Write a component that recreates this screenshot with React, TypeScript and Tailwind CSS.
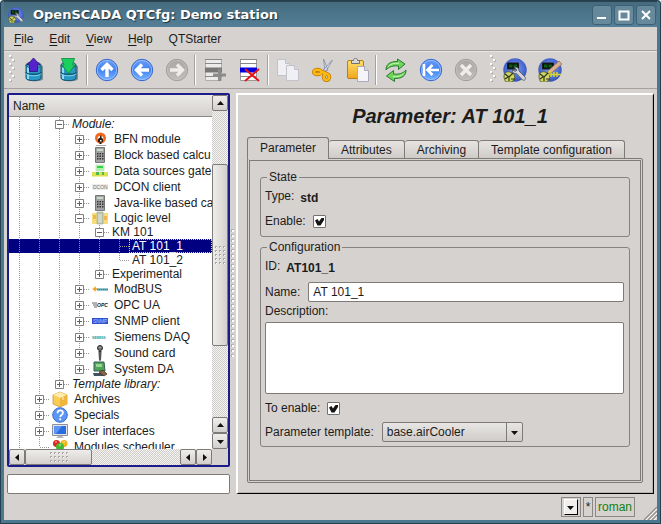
import { useState } from 'react'
import type { ReactNode } from 'react'

type Guide = 'line' | 'end' | 'tee' | 'plus' | 'minus' | 'lastplus'

interface Row {
  label: string
  guides: Guide[]
  icon?: ReactNode
  italic?: boolean
  short?: boolean
}

function AppIcon({ size = 24, tool }: { size?: number; tool?: 'wrench' | 'pencil' }) {
  return (
    <svg width={size} height={size} viewBox="0 0 24 24">
      <defs>
        <radialGradient id="ball" cx="50%" cy="45%" r="65%">
          <stop offset="0" stopColor="#7f9df0" />
          <stop offset=".6" stopColor="#4a6bd4" />
          <stop offset="1" stopColor="#283f8c" />
        </radialGradient>
      </defs>
      <circle cx="12" cy="12" r="11.7" fill="url(#ball)" />
      <path d="M4.500 5h11v6h-11z" fill="#06140a" stroke="#1c1c1c" />
      <path d="M6 6.500h3.500v3H6zM10.500 6.500H14v3h-3.500z" fill="#0b5a16" />
      <path d="M1 18c0-3 3-5 6-4l4 2 1 4-3 4H3c-1-1-2-3-2-6z" fill="#cfd66a" stroke="#4d521f" strokeWidth=".8" />
      <path d="m2 16 4 3 4-4M6 19v4M2 21l3-2M8 21h4" fill="none" stroke="#343815" strokeWidth="1.200" />
      {tool === 'pencil' ? (
        <>
          <path d="M10 16.500h13M13 14v5M16 14v5M19 14v5" stroke="#d6d533" strokeWidth="1.500" />
          <path d="m11 12 10-9 3 3-10 8.500-4 .5z" fill="#dbb092" stroke="#8d6550" strokeWidth=".7" />
          <path d="m10 15 1-3 3 2.500z" fill="#ead82d" />
        </>
      ) : (
        <path d="M11 9.500c3-1 5 .5 5 3.500l6 6c1.500 2-.5 4-2.500 3l-6-6.500c-2.500.5-4.500-1-4-3.500l3 1.500 1.500-1.500z" fill="#d0d2d6" stroke="#5a5f66" strokeWidth=".9" />
      )}
    </svg>
  )
}

function DbIcon({ up }: { up?: boolean }) {
  return (
    <svg width="24" height="24" viewBox="0 0 24 24">
      <path d="M5 8v13c0 3 16 3 16 0V8z" fill="#12394d" opacity=".45" />
      <path d="M4 7v13c0 3.500 15 3.500 15 0V7z" fill="#2a98c4" stroke="#17536e" />
      <path d="M6 9v12" stroke="#8ddcf5" strokeWidth="2" />
      <path d="M4 14c0 3 15 3 15 0" fill="none" stroke="#125471" strokeWidth="1.500" />
      <path d="M4 15.500c0 3 15 3 15 0" fill="none" stroke="#7fd7f2" />
      <ellipse cx="11.500" cy="7" rx="7.500" ry="3" fill="#66c5e6" stroke="#17536e" />
      {up
        ? <path d="m11.500 0 6.500 7h-2.500v6.500h-8V7H5z" fill="#5522cc" stroke="#29107e" strokeWidth=".8" />
        : <path d="M4.500.5h13L15.500 7H18l-6.500 8.500L5 7h2z" fill="#1bcf5e" stroke="#0d8a37" strokeWidth=".8" />}
    </svg>
  )
}

function RoundIcon({ kind }: { kind: 'up' | 'left' | 'right' | 'start' | 'stop' }) {
  const gray = kind === 'right' || kind === 'stop'
  const paths = {
    up: 'M12 19V6M6.500 12 12 6.500l5.500 5.500',
    left: 'M19 12H6M12 6.500 6.500 12l5.500 5.500',
    right: 'M5 12h13M12 6.500l5.500 5.500-5.500 5.500',
    start: 'M20 12H8M13.500 7l-5 5 5 5M5 6v12',
    stop: 'm7 7 10 10M17 7 7 17',
  }
  return (
    <svg width="24" height="24" viewBox="0 0 24 24">
      <defs>
        <linearGradient id="blueBall" x2="0" y2="1">
          <stop offset="0" stopColor="#6a9cf5" />
          <stop offset=".5" stopColor="#4382f2" />
          <stop offset="1" stopColor="#79b6ff" />
        </linearGradient>
        <linearGradient id="grayBall" x2="0" y2="1">
          <stop offset="0" stopColor="#aaa6a3" />
          <stop offset="1" stopColor="#c0bdba" />
        </linearGradient>
      </defs>
      <circle cx="12" cy="12" r="10.700" fill={gray ? 'url(#grayBall)' : 'url(#blueBall)'} stroke={gray ? '#a19d9a' : '#3467cf'} />
      <circle cx="12" cy="12" r="9.600" fill="none" stroke={gray ? '#c4c1be' : '#a3c3fb'} strokeWidth=".8" />
      <path d={paths[kind]} fill="none" stroke={gray ? '#efedeb' : '#fff'} strokeWidth={kind === 'start' ? 2.600 : 3.400} />
    </svg>
  )
}

function ItemIcon({ remove }: { remove?: boolean }) {
  return (
    <svg width="24" height="24" viewBox="0 0 24 24">
      <path d="M2.500 1.500h16v21h-16z" fill={remove ? '#fff' : '#ecebe9'} stroke={remove ? '#999' : '#b0aeac'} />
      <path d="M2 1.500h17M2 5.500h17M2 18.500h17" stroke="#888" />
      <path d="M2 9.500h17v5H2z" fill={remove ? '#0000e0' : '#777'} />
      {remove
        ? <path d="m7 11 14 12M21 11 7 23" stroke="#e81515" strokeWidth="2" />
        : <path d="M16.500 11v12M10 17h13" stroke="#8b8b8b" strokeWidth="3" />}
    </svg>
  )
}

function CopyIcon() {
  return (
    <svg width="24" height="24" viewBox="0 0 24 24" fill="#f0f0f4" stroke="#c2c2cc">
      <path d="M1.500 1.500h8l4 4v12h-12z" />
      <path d="M9.500 1.500v4h4" fill="#d9d9e2" />
      <path d="M10.500 7.500h8l4 4v11h-12z" />
      <path d="M18.500 7.500v4h4" fill="#d9d9e2" />
    </svg>
  )
}

function CutIcon() {
  return (
    <svg width="24" height="24" viewBox="0 0 24 24">
      <path d="m12.500 1 4.500 11-3 1.500zM21.500 2l-7 12-3-1.500z" fill="#e2e5ef" stroke="#8089a0" strokeWidth=".8" />
      <g fill="none" stroke="#b97500" strokeWidth="4">
        <ellipse cx="6.500" cy="14" rx="3.700" ry="2.200" />
        <ellipse cx="15.500" cy="19" rx="2.700" ry="3" />
        <path d="m10 13.500 6 2.500" />
      </g>
      <g fill="none" stroke="#fdb813" strokeWidth="2.600">
        <ellipse cx="6.500" cy="14" rx="3.700" ry="2.200" />
        <ellipse cx="15.500" cy="19" rx="2.700" ry="3" />
        <path d="m10 13.500 6 2.500" />
      </g>
    </svg>
  )
}

function PasteIcon() {
  return (
    <svg width="24" height="24" viewBox="0 0 24 24">
      <defs>
        <linearGradient id="board" x2="0" y2="1">
          <stop offset="0" stopColor="#ffe06b" />
          <stop offset="1" stopColor="#efa51c" />
        </linearGradient>
      </defs>
      <rect x="1.500" y="2.500" width="16" height="18" rx="1.500" fill="url(#board)" stroke="#b97d16" />
      <path d="M5.500 5.500v-3h2c0-3 4-3 4 0h2v3z" fill="#d9d9dc" stroke="#77706a" />
      <path d="M11.500 8.500h7l4 4v11h-11z" fill="#f4f4f9" stroke="#aaaabd" />
      <path d="M18.500 8.500v4h4" fill="#d9d9e5" stroke="#aaaabd" />
    </svg>
  )
}

function RefreshIcon() {
  return (
    <svg width="24" height="24" viewBox="0 0 24 24" fill="#6fd45c" stroke="#2a7a30">
      <path d="M2 12c0-6 4-8.500 11.500-8.500V1l7.500 5-6.500 5.500V8C9 7.500 5 8.500 2 12z" />
      <path d="M22 12c0 6-4 8.500-11.500 8.500V23.500L2.500 18l7-5.500V16c5.500.5 9.500-.5 12.500-4z" />
      <path d="M4.500 8.500C7 5.500 10 5.300 15 5.300M19.500 15.500c-2.500 3-5.500 3.200-10.500 3.200" fill="none" stroke="#c9f7be" />
    </svg>
  )
}

const BfnIcon = (
  <svg width="16" height="16" viewBox="0 0 16 16">
    <circle cx="8.500" cy="7" r="5.500" fill="#f2691c" />
    <circle cx="8.500" cy="7.500" r="2.800" fill="#fff" />
    <path d="M8 4.500h1.500v2L11 8v3H9.500v2h-2v-2H6V8l2-1.500z" fill="#2a1a12" />
    <path d="M8 9h1.500v1.500H8z" fill="#fff" />
    <path d="M4 14.500h10" stroke="#aaa" />
  </svg>
)

const CalcIcon = (
  <svg width="16" height="16" viewBox="0 0 16 16">
    <path d="M3.500.5h9v15h-9z" fill="#a2a2a2" stroke="#777" />
    <path d="M5 2h6v2H5z" fill="#c7d9c7" />
    <path d="M5 6h1.500v1.500H5zM7.500 6H9v1.500H7.500zM10 6h1.500v1.500H10zM5 8.500h1.500V10H5zM7.500 8.500H9V10H7.500zM10 8.500h1.500V10H10zM5 11h1.500v1.500H5zM7.500 11H9v1.500H7.500zM10 11h1.500v1.500H10z" fill="#333" />
  </svg>
)

const GateIcon = (
  <svg width="16" height="16" viewBox="0 0 16 16">
    <path d="M4 2h8v6H4z" fill="#a9f5a4" stroke="#d3dfd0" />
    <path d="M5 4h6" stroke="#2fd544" strokeWidth="2" />
    <path d="M0 9h16v5H0z" fill="#dde04f" />
    <path d="M4 9h3v3H4zM10 9h2v3h-2z" fill="#52b850" />
    <path d="M0 13.500h16" stroke="#f2ef9c" />
  </svg>
)

const DconIcon = (
  <svg width="16" height="16" viewBox="0 0 16 16">
    <path d="M0 5h16v6H0z" fill="#ececec" />
    <text x="1" y="10" fontSize="5" fontFamily="Liberation Sans, sans-serif" fill="#777">DCON</text>
  </svg>
)

const LogicIcon = (
  <svg width="16" height="14" viewBox="0 0 16 14">
    <path d="M0 2h16v11H0z" fill="#f5dd7d" />
    <path d="M5 1h6v12H5z" fill="#b9c5b8" stroke="#a0a48c" strokeWidth=".6" />
    <path d="M1 4h3v4H1zM12 5h3v4h-3z" fill="#efb64e" />
    <path d="M7 3v9M9 3v9" stroke="#e5e8df" />
  </svg>
)

const ModbusIcon = (
  <svg width="16" height="16" viewBox="0 0 16 16">
    <path d="M5 8.500h11" stroke="#328c9b" strokeWidth="2" />
    <path d="M6 8h9" stroke="#8cc3cb" strokeDasharray="1 1" />
    <path d="m3 5 1 2 2 1-2 1-1 2-1-2-2-1 2-1z" fill="#efa421" />
  </svg>
)

const OpcIcon = (
  <svg width="16" height="16" viewBox="0 0 16 16">
    <path d="M0 6h5M1 8h4M2 10h3" stroke="#666" />
    <text x="5" y="10" fontSize="5" fontWeight="bold" fontStyle="italic" fontFamily="Liberation Sans, sans-serif" fill="#111">OPC</text>
  </svg>
)

const SnmpIcon = (
  <svg width="16" height="16" viewBox="0 0 16 16">
    <path d="M0 5h16v6H0z" fill="#3050d0" />
    <text x="1" y="10" fontSize="5" fontFamily="Liberation Sans, sans-serif" fill="#b8c8ff">SNMP</text>
  </svg>
)

const SiemensIcon = (
  <svg width="16" height="16" viewBox="0 0 16 16">
    <text x="0" y="10" fontSize="3" fontWeight="bold" fontFamily="Liberation Sans, sans-serif" fill="#109a9a">SIEMENS</text>
  </svg>
)

const MicIcon = (
  <svg width="16" height="16" viewBox="0 0 16 16">
    <circle cx="8" cy="3" r="2.500" fill="#666" stroke="#2c2c2c" />
    <path d="M6 2.500h4M8 1v4" stroke="#aaa" strokeWidth=".6" />
    <path d="M6.500 6h3L9 15.500H7z" fill="#333" />
    <path d="M8 7v8" stroke="#999" strokeWidth=".7" />
  </svg>
)

const SystemIcon = (
  <svg width="16" height="16" viewBox="0 0 16 16">
    <path d="M2 1h10l1 9H2z" fill="#4ba555" stroke="#3b5960" />
    <path d="M4 3h6v3H4z" fill="#9bd394" />
    <path d="M1 12h6l3-3 5 4-4 2H2z" fill="#43515d" />
    <path d="m7 11 4-2 4 4-3 2z" fill="#8d6542" stroke="#35251b" strokeWidth=".6" />
  </svg>
)

const BoxIcon = (
  <svg width="16" height="16" viewBox="0 0 16 16">
    <path d="m1 4 7-3 7 3v9l-7 3-7-3z" fill="#f9cd55" stroke="#c99a3a" strokeWidth=".8" />
    <path d="m1 4 7-3 7 3-7 3z" fill="#ffe9a4" />
    <path d="M8 7v8.500L15 13V4z" fill="#f0b63c" />
    <path d="m4 3 7 3v3" fill="none" stroke="#fff2c4" />
  </svg>
)

const HelpIcon = (
  <svg width="16" height="16" viewBox="0 0 16 16">
    <circle cx="8" cy="8" r="7.300" fill="#5b95f6" stroke="#3a6cd0" />
    <path d="M5.500 6.300c0-4 5.500-3.500 5.500-.6C11 8 8.200 8 8.200 10M8.200 11.300v1.900" fill="none" stroke="#fff" strokeWidth="1.700" />
  </svg>
)

const ScreenIcon = (
  <svg width="16" height="16" viewBox="0 0 16 16">
    <path d="M.5 1.500h15v11H.5z" fill="#e3e3ea" stroke="#8f8f9c" />
    <path d="M2 3h12v8H2z" fill="#286ce0" />
    <path d="M2 3h8l-6 8H2z" fill="#5c96f4" />
    <path d="M6 13h4l2 2H4z" fill="#b6b6bf" />
  </svg>
)

const ModulesIcon = (
  <svg width="16" height="16" viewBox="0 0 16 16">
    <circle cx="4.500" cy="4.500" r="3.500" fill="#e22518" />
    <circle cx="12" cy="4.500" r="3.500" fill="#efb61a" />
    <circle cx="8" cy="8" r="4" fill="#44bb2e" />
    <path d="M3 3h2M11 3h2M7 6h2" stroke="#fff" opacity=".7" />
  </svg>
)

const rows: Row[] = [
  { label: 'Module:', guides: ['line', 'line', 'minus'], italic: true, short: true },
  { label: 'BFN module', guides: ['line', 'line', 'line', 'plus'], icon: BfnIcon },
  { label: 'Block based calcu', guides: ['line', 'line', 'line', 'plus'], icon: CalcIcon },
  { label: 'Data sources gate', guides: ['line', 'line', 'line', 'plus'], icon: GateIcon },
  { label: 'DCON client', guides: ['line', 'line', 'line', 'plus'], icon: DconIcon },
  { label: 'Java-like based ca', guides: ['line', 'line', 'line', 'plus'], icon: CalcIcon },
  { label: 'Logic level', guides: ['line', 'line', 'line', 'minus'], icon: LogicIcon, short: true },
  { label: 'KM 101', guides: ['line', 'line', 'line', 'line', 'minus'], short: true },
  { label: 'AT 101_1', guides: ['line', 'line', 'line', 'line', 'line', 'tee'], short: true },
  { label: 'AT 101_2', guides: ['line', 'line', 'line', 'line', 'line', 'end'], short: true },
  { label: 'Experimental', guides: ['line', 'line', 'line', 'line', 'lastplus'], short: true },
  { label: 'ModBUS', guides: ['line', 'line', 'line', 'plus'], icon: ModbusIcon },
  { label: 'OPC UA', guides: ['line', 'line', 'line', 'plus'], icon: OpcIcon },
  { label: 'SNMP client', guides: ['line', 'line', 'line', 'plus'], icon: SnmpIcon },
  { label: 'Siemens DAQ', guides: ['line', 'line', 'line', 'plus'], icon: SiemensIcon },
  { label: 'Sound card', guides: ['line', 'line', 'line', 'plus'], icon: MicIcon },
  { label: 'System DA', guides: ['line', 'line', 'line', 'lastplus'], icon: SystemIcon },
  { label: 'Template library:', guides: ['line', 'line', 'lastplus'], italic: true, short: true },
  { label: 'Archives', guides: ['line', 'plus'], icon: BoxIcon },
  { label: 'Specials', guides: ['line', 'plus'], icon: HelpIcon },
  { label: 'User interfaces', guides: ['line', 'plus'], icon: ScreenIcon },
  { label: 'Modules scheduler', guides: ['line', 'end'], icon: ModulesIcon },
]

function GuideCell({ kind, height, label }: { kind: Guide; height: number; label: string }) {
  const mid = height / 2
  const box = kind === 'plus' || kind === 'minus' || kind === 'lastplus'
  const stops = kind === 'end' || kind === 'lastplus'
  return (
    <span className="relative flex h-full w-5 shrink-0 items-center">
      <svg className="absolute inset-0" width="20" height={height} stroke="#989898" strokeDasharray="1 1">
        <path d={`M10.500 0V${stops ? mid : height}`} />
        {kind !== 'line' && <path d={`M11 ${mid + 0.5}h9`} />}
      </svg>
      {box && (
        <button aria-label={`Toggle ${label}`} className="relative ml-[6px] h-[9px] w-[9px]">
          <svg width="9" height="9" className="block">
            <path d="M.5.5h8v8h-8z" fill="#fff" stroke="#808080" />
            <path d={kind === 'minus' ? 'M2 4.500h5' : 'M2 4.500h5M4.500 2v5'} stroke="#606060" />
          </svg>
        </button>
      )}
    </span>
  )
}

function TreeRow({ row, selected, onSelect }: { row: Row; selected: boolean; onSelect: () => void }) {
  const height = row.short ? 14 : 16
  return (
    <li className={`flex ${row.short ? 'h-[14px]' : 'h-4'} ${selected ? 'bg-[#000080] text-white' : ''}`}>
      {row.guides.map((g, i) => <GuideCell key={i} kind={g} height={height} label={row.label} />)}
      <button
        onClick={onSelect}
        className={`flex h-full flex-1 items-center gap-[6px] pl-[3px] text-left leading-[14px] whitespace-nowrap ${row.italic ? 'italic' : ''} ${selected ? 'outline-1 -outline-offset-1 outline-dotted outline-[#d8d89a]' : ''}`}
      >
        {row.icon}
        {row.label}
      </button>
    </li>
  )
}

function Arrow({ dir }: { dir: 'up' | 'down' | 'left' | 'right' }) {
  const paths = { up: 'M0 5h7L3.500 1z', down: 'M0 2h7L3.500 6z', left: 'M5 0v7L1 3.500z', right: 'M2 0v7l4-3.500z' }
  return <svg width="7" height="7"><path d={paths[dir]} fill="#111" /></svg>
}

function ScrollButton({ dir }: { dir: 'up' | 'down' | 'left' | 'right' }) {
  return (
    <button aria-label={`Scroll ${dir}`} className="flex h-4 w-4 shrink-0 items-center justify-center rounded-[2px] border border-[#7d7a78] bg-linear-to-b from-[#f0eeec] to-[#d2cfcc]">
      <Arrow dir={dir} />
    </button>
  )
}

function Dots({ cols, count }: { cols: number; count: number }) {
  return (
    <svg width={cols * 4} height={count * 4}>
      {Array.from({ length: cols * count }, (_, i) => (
        <g key={i}>
          <path d={`M${(i % cols) * 4 + 1} ${Math.floor(i / cols) * 4 + 1}h2v2h-2z`} fill="#aaa7a4" />
          <path d={`M${(i % cols) * 4 + 2} ${Math.floor(i / cols) * 4 + 2}h1v1h-1z`} fill="#fff" />
        </g>
      ))}
    </svg>
  )
}

function SplitterDots() {
  return (
    <svg width="4" height="130" className="shrink-0">
      {Array.from({ length: 26 }, (_, i) => (
        <g key={i}>
          <path d={`M0 ${i * 5}h3v3h-3z`} fill="#b3afac" />
          <path d={`M1 ${i * 5 + 1}h2v2h-2z`} fill="#fff" />
        </g>
      ))}
    </svg>
  )
}

const trough = 'bg-[repeating-conic-gradient(#d0cecb_0_25%,#f4f3f2_0_50%)] bg-[length:2px_2px]'

function Grip() {
  return (
    <svg width="7" height="30" className="shrink-0">
      {[0, 1, 2, 3, 4, 5, 6].map(i => (
        <g key={i}>
          <path d={`M${i % 2 ? 4 : 1} ${i * 4 + 1}h2v2h-2z`} fill="#b3afac" />
          <path d={`M${i % 2 ? 3 : 0} ${i * 4}h2v2h-2z`} fill="#fff" />
        </g>
      ))}
    </svg>
  )
}

function Separator() {
  return <div className="mr-px h-[30px] w-[2px] border-l border-r border-l-[#a5a19e] border-r-white" />
}

function ToolButton({ label, children }: { label: string; children: ReactNode }) {
  return <button aria-label={label} title={label} className="flex h-8 w-[35px] items-center justify-center">{children}</button>
}

function CheckBox({ label }: { label: string }) {
  return (
    <label className="flex w-fit items-center gap-[7px]">
      {label}
      <span className="relative h-[13px] w-[13px]">
        <input type="checkbox" defaultChecked className="peer block h-[13px] w-[13px] appearance-none rounded-[1px] border border-[#73706e] bg-white" />
        <svg className="pointer-events-none absolute inset-0 hidden peer-checked:block" width="13" height="13">
          <path d="M2 5.500 4.500 4 6 6.500 8.500 3H11v2L7.500 10.500h-3z" fill="#151515" />
        </svg>
      </span>
    </label>
  )
}

const menus = [['F', 'ile'], ['E', 'dit'], ['V', 'iew'], ['H', 'elp']]
const tabs = ['Parameter', 'Attributes', 'Archiving', 'Template configuration']

export default function App() {
  const [selected, setSelected] = useState('AT 101_1')
  const [tab, setTab] = useState('Parameter')

  return (
    <div className="flex h-screen flex-col overflow-hidden rounded-t-[4px] border-r-4 border-b-4 border-l-4 border-[#4c788f] bg-[#d6d2cf] font-['Liberation_Sans',Arial,sans-serif] text-xs leading-[14px] text-[#1c1c1c] outline-1 -outline-offset-1 outline-[#263f4e]">
      <header className="-mx-1 flex h-[27px] shrink-0 items-center border-t-2 border-t-[#2c4452] bg-linear-to-b from-[#466b7e] to-[#547f97] pr-[5px] pl-2">
        <AppIcon size={16} tool="wrench" />
        <h1 className="ml-[9px] flex-1 font-['DejaVu_Sans',sans-serif] text-[13px] font-bold text-white [text-shadow:1px_1px_1px_#1c303c]">OpenSCADA QTCfg: Demo station</h1>
        <div className="flex gap-[2px]">
          {['M6 13h9', 'M6.500 6.500h9v8h-9z', 'm7 6 8 8M15 6l-8 8'].map((d, i) => (
            <button key={d} aria-label={['Minimize', 'Maximize', 'Close'][i]} className="h-5 w-5 rounded-[3px] border border-[#3c6075] bg-[#66899b]">
              <svg width="18" height="18" viewBox="2 1 18 18" fill="none" stroke="#fff" strokeWidth="2"><path d={d} /></svg>
            </button>
          ))}
        </div>
      </header>

      <nav className="flex h-6 shrink-0 items-center gap-4 border-b border-[#a5a19e] pl-[10px]">
        {menus.map(([key, rest]) => (
          <button key={rest}><span className="underline underline-offset-2">{key}</span>{rest}</button>
        ))}
        <button>QTStarter</button>
      </nav>

      <div role="toolbar" className="flex h-[38px] shrink-0 items-center border-t border-b border-t-[#e8e6e4] border-b-[#a5a19e] pl-[5px]">
        <Grip />
        <ToolButton label="Load"><DbIcon up /></ToolButton>
        <ToolButton label="Save"><DbIcon /></ToolButton>
        <Separator />
        <ToolButton label="Up"><RoundIcon kind="up" /></ToolButton>
        <ToolButton label="Back"><RoundIcon kind="left" /></ToolButton>
        <ToolButton label="Forward"><RoundIcon kind="right" /></ToolButton>
        <Separator />
        <ToolButton label="Add item"><ItemIcon /></ToolButton>
        <ToolButton label="Delete item"><ItemIcon remove /></ToolButton>
        <Separator />
        <ToolButton label="Copy"><CopyIcon /></ToolButton>
        <ToolButton label="Cut"><CutIcon /></ToolButton>
        <ToolButton label="Paste"><PasteIcon /></ToolButton>
        <Separator />
        <ToolButton label="Refresh"><RefreshIcon /></ToolButton>
        <ToolButton label="Start"><RoundIcon kind="start" /></ToolButton>
        <ToolButton label="Stop"><RoundIcon kind="stop" /></ToolButton>
        <div className="w-[7px]" />
        <Grip />
        <ToolButton label="Configurator"><AppIcon tool="wrench" /></ToolButton>
        <ToolButton label="Vision"><AppIcon tool="pencil" /></ToolButton>
      </div>

      <main className="flex min-h-0 flex-1 pt-1 pr-[3px] pl-[3px]">
        <aside className="flex w-[223px] shrink-0 flex-col gap-[7px]">
          <div className="flex min-h-0 flex-1 flex-col rounded-[2px] border-2 border-[#1c1c88] bg-white">
            <div className="flex min-h-0 flex-1">
              <div className="flex min-w-0 flex-1 flex-col overflow-hidden">
                <div className="flex h-[22px] shrink-0 items-center border-b border-[#8a8785] bg-linear-to-b from-[#eceae8] to-[#d3d0cd] pl-1">Name</div>
                <ul className="min-h-0 flex-1 overflow-hidden">
                  {rows.map(r => <TreeRow key={r.label} row={r} selected={r.label === selected} onSelect={() => setSelected(r.label)} />)}
                </ul>
              </div>
              <div className={`flex w-4 flex-col ${trough}`}>
                <ScrollButton dir="up" />
                <div className="flex-[53]" />
                <div className="flex flex-[182] items-center justify-center rounded-[2px] border border-[#7d7a78] bg-linear-to-r from-[#efedeb] to-[#d3d0cd]"><Dots cols={3} count={5} /></div>
                <div className="flex-[71]" />
                <ScrollButton dir="up" />
                <ScrollButton dir="down" />
              </div>
            </div>
            <div className="flex h-4 bg-[#d6d2cf] pr-4">
              <div className={`flex flex-1 ${trough}`}>
                <ScrollButton dir="left" />
                <div className="flex flex-[66] items-center justify-center rounded-[2px] border border-[#7d7a78] bg-linear-to-b from-[#efedeb] to-[#d3d0cd]"><Dots cols={5} count={3} /></div>
                <div className="flex-[89]" />
                <ScrollButton dir="left" />
                <ScrollButton dir="right" />
              </div>
            </div>
          </div>
          <input aria-label="Search" className="h-5 shrink-0 rounded-[2px] border border-[#7d7a78] bg-white px-1 outline-none" />
        </aside>

        <div className="flex w-[6px] shrink-0 items-center justify-center overflow-hidden"><SplitterDots /></div>

        <section className="flex min-w-0 flex-1 flex-col border border-t-2 border-l-2 border-t-white border-r-black border-b-black border-l-white px-[10px] pb-[10px] pl-[9px] shadow-[inset_-1px_-1px_0_#b5b2af]">
          <h2 className="py-2 pl-[10px] text-center text-xl leading-[26px] font-bold italic">Parameter: AT 101_1</h2>
          <div role="tablist" className="flex h-[21px] shrink-0 items-end">
            {tabs.map(t => (
              <button
                key={t}
                role="tab"
                aria-selected={t === tab}
                onClick={() => setTab(t)}
                className={`rounded-t-[3px] border-t border-r border-[#7d7a78] ${t === tab ? 'z-10 -mb-px h-[22px] border-l bg-[#d6d2cf] px-3 pb-[2px]' : 'h-[18px] bg-linear-to-b from-[#e6e3e1] to-[#cfccc8] px-3'}`}
              >
                {t}
              </button>
            ))}
          </div>
          <div role="tabpanel" className="flex-1 rounded-[2px] border-[3px] border-double border-[#7d7a78] px-[10px] pt-[9px]">
            <fieldset className="rounded-[3px] border border-[#858280] px-1 pb-[6px]">
              <legend className="ml-[2px] px-[2px]">State</legend>
              <div className="flex h-6 items-center gap-[6px]">Type: <b className="pt-1">std</b></div>
              <div className="mt-1 flex h-[18px] items-center"><CheckBox label="Enable:" /></div>
            </fieldset>
            <fieldset className="mt-[3px] rounded-[3px] border border-[#858280] pr-[5px] pb-1 pl-1">
              <legend className="ml-[2px] px-[2px]">Configuration</legend>
              <div className="flex h-6 items-center gap-[6px]">ID: <b className="pt-1">AT101_1</b></div>
              <label className="mt-1 flex h-5 items-center gap-2">
                Name:
                <input defaultValue="AT 101_1" className="h-5 min-w-0 flex-1 rounded-[2px] border border-[#7d7a78] bg-white px-1 outline-none" />
              </label>
              <label className="mt-[2px] block">
                Description:
                <textarea className="mt-1 block h-[72px] w-full resize-none rounded-[2px] border border-[#7d7a78] bg-white p-1 outline-none" />
              </label>
              <div className="mt-[5px] flex h-[18px] items-center"><CheckBox label="To enable:" /></div>
              <label className="mt-[5px] flex h-5 items-center gap-2">
                Parameter template:
                <span className="relative">
                  <select className="h-5 w-[141px] appearance-none rounded-[2px] border border-[#7d7a78] bg-linear-to-b from-[#e8e6e4] to-[#cfccc9] px-1 outline-none">
                    <option>base.airCooler</option>
                  </select>
                  <span className="pointer-events-none absolute inset-y-0 right-0 flex w-[17px] items-center justify-center border-l border-[#7d7a78]"><Arrow dir="down" /></span>
                </span>
              </label>
            </fieldset>
          </div>
        </section>
      </main>

      <footer className="flex h-[26px] shrink-0 items-center justify-end gap-[2px]">
        <div className="flex h-5 w-5 items-center justify-center border border-[#8a8785]">
          <button aria-label="Messages" className="flex h-4 w-[14px] items-center justify-center border border-t-white border-r-black border-b-black border-l-white bg-[#f0efed]"><Arrow dir="down" /></button>
        </div>
        <div className="flex h-5 w-[10px] items-center justify-center border border-[#8a8785]">*</div>
        <button className="h-5 border border-[#8a8785] px-[2px] text-[#108010]">roman</button>
        <svg width="14" height="14" className="ml-[6px] self-end" stroke="#989592">
          <path d="M1 14 14 1M5 14l9-9M9 14l5-5" strokeWidth="1.500" />
          <path d="M3 14 14 3M7 14l7-7M11 14l3-3" stroke="#fff" />
        </svg>
      </footer>
    </div>
  )
}
